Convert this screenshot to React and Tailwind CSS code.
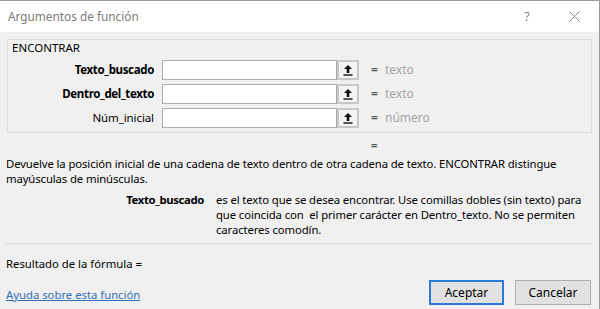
import React from "react";

const args = [
  { name: "Texto_buscado", bold: true, value: "texto" },
  { name: "Dentro_del_texto", bold: true, value: "texto" },
  { name: "Núm_inicial", bold: false, value: "número" },
];

function RefButton() {
  return (
    <div className="w-[22px] h-[20px] border-2 border-[#c8c8c8] bg-[#f3f3f3] flex items-center justify-center">
      <svg width="10" height="12" viewBox="0 0 10 12">
        <path d="M5 1 L9 5 L6.3 5 L6.3 9 L3.7 9 L3.7 5 L1 5 Z" fill="#111" />
        <rect x="0.5" y="10.3" width="9" height="1.4" fill="#111" />
      </svg>
    </div>
  );
}

function ArgRow({ name, bold, value }) {
  return (
    <div className="flex items-center h-[20px]">
      <div
        className={`w-[146px] text-right text-[11.5px] text-black ${
          bold ? "font-bold tracking-[-0.35px]" : "tracking-[-0.1px]"
        }`}
      >
        {name}
      </div>
      <div className="ml-[8px] w-[175px] h-[20px] bg-white border border-[#adadad]" />
      <RefButton />
      <div className="ml-[12px] w-[14px] text-[12px] text-[#555] font-bold">=</div>
      <div className="text-[12px] text-[#a5a5a5]">{value}</div>
    </div>
  );
}

export default function App() {
  return (
    <div
      className="w-[600px] h-[309px] overflow-hidden flex flex-col border-t border-r border-[#9a9a9a] bg-[#f0f0f0] text-black"
      style={{ fontFamily: '"Noto Sans", "Open Sans", sans-serif' }}
    >
      {/* title bar */}
      <div className="h-[31px] shrink-0 bg-white flex items-center">
        <div className="pl-[8px] text-[11.8px] text-[#7a7a7a]">Argumentos de función</div>
        <div className="ml-auto mr-[39px] text-[13px] text-[#8a8a8a]">?</div>
        <svg className="mr-[19px]" width="11" height="11" viewBox="0 0 11 11">
          <path d="M0.5 0.5 L10.5 10.5 M10.5 0.5 L0.5 10.5" stroke="#8a8a8a" strokeWidth="1" />
        </svg>
      </div>

      {/* group box */}
      <div className="ml-[7px] mt-[7px] w-[585px] border border-[#dcdcdc] pb-[4px]">
        <div className="pl-[4px] h-[20px] text-[11.5px] leading-[14px] pt-[1px]">ENCONTRAR</div>
        <div className="flex flex-col gap-[4px]">
          {args.map((a) => (
            <ArgRow key={a.name} {...a} />
          ))}
        </div>
      </div>

      <div className="ml-[371px] mt-[4px] h-[16px] leading-[16px] text-[11px] text-[#555] font-bold">=</div>

      {/* description */}
      <div className="pl-[6px] mt-[3px] text-[11.3px] leading-[15px] whitespace-nowrap tracking-[-0.1px]">
        <div>
          Devuelve la posición inicial de una cadena de texto dentro de otra cadena de texto. ENCONTRAR distingue
        </div>
        <div>mayúsculas de minúsculas.</div>
      </div>

      <div className="flex mt-[6px] text-[11.3px] leading-[15px] whitespace-nowrap tracking-[-0.1px]">
        <div className="w-[204px] text-right font-bold tracking-[-0.35px]">Texto_buscado</div>
        <div className="ml-[12px]">
          <div>es el texto que se desea encontrar. Use comillas dobles (sin texto) para</div>
          <div>que coincida con&nbsp; el primer carácter en Dentro_texto. No se permiten</div>
          <div>caracteres comodín.</div>
        </div>
      </div>

      <div className="ml-[5px] mr-[7px] mt-[6px] border-t border-[#dadada]" />

      <div className="pl-[6px] mt-[12px] text-[11.3px] leading-[15px]">Resultado de la fórmula =</div>

      <div className="flex items-center mt-auto mb-[4px] pr-[8px]">
        <a
          href="#"
          className="pl-[6px] pt-[3px] text-[11.3px] leading-[15px] text-[#2f6fb7] underline"
        >
          Ayuda sobre esta función
        </a>
        <button className="ml-auto w-[75px] h-[25px] bg-[#e1e1e1] border-2 border-[#2a7bd4] text-[12px]">
          Aceptar
        </button>
        <button className="ml-[11px] w-[76px] h-[25px] bg-[#e1e1e1] border border-[#adadad] text-[12px]">
          Cancelar
        </button>
      </div>
    </div>
  );
}
